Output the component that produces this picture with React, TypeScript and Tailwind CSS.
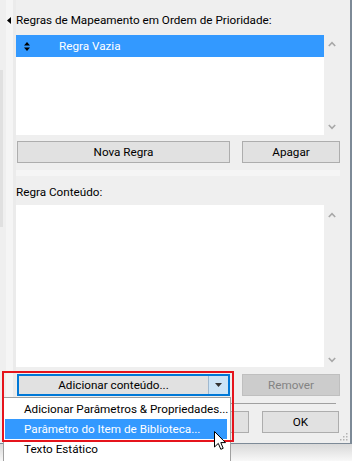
import React from "react";

function ChevUp() {
  return (
    <svg width="8" height="6" viewBox="0 0 8 6">
      <polyline points="0.8,5 4,1.6 7.2,5" fill="none" stroke="#a8a8a8" strokeWidth="1.6" />
    </svg>
  );
}
function ChevDown() {
  return (
    <svg width="8" height="6" viewBox="0 0 8 6">
      <polyline points="0.8,1 4,4.4 7.2,1" fill="none" stroke="#a8a8a8" strokeWidth="1.6" />
    </svg>
  );
}

function Btn({ children, className = "" }: { children?: React.ReactNode; className?: string }) {
  return (
    <div
      className={
        "h-[22px] flex items-center justify-center border border-[#adadad] bg-[#e1e1e1] text-black " + className
      }
    >
      {children}
    </div>
  );
}

export default function App() {
  return (
    <div className="relative w-[352px] h-[461px] overflow-hidden bg-[#efefef] text-[11.7px] leading-[16px] text-black font-[Roboto,'Noto_Sans',sans-serif] flex flex-col">
      {/* window */}
      <div className="h-[444px] flex border-r-2 border-b border-[#7d8a97]">
        {/* left gutter */}
        <div className="w-[16px] flex">
          <div className="w-[6px] flex flex-col">
            <div className="h-[70px]" />
            <div className="w-[3px] h-[157px] bg-[#e0e0e0]" />
          </div>
          <div className="w-[7px] bg-[#f5f5f5] pt-[17px] pl-px">
            <svg width="4" height="7" viewBox="0 0 4 7">
              <polygon points="4,0 0,3.5 4,7" fill="#000" />
            </svg>
          </div>
          <div className="w-[3px] bg-[#ebebeb]" />
        </div>

        {/* main */}
        <div className="flex-1 flex flex-col pr-[10px]">
          <div className="h-[35px] pt-[12px] whitespace-nowrap">Regras de Mapeamento em Ordem de Prioridade:</div>

          {/* rules list */}
          <div className="h-[100px] flex">
            <div className="flex-1 bg-white">
              <div className="h-[22px] bg-[#3399ff] text-white flex items-center">
                <div className="w-[43px] pl-[8px] flex items-center">
                  <svg width="6" height="9" viewBox="0 0 6 9">
                    <polygon points="3,0 6,3.5 0,3.5" fill="#000" />
                    <polygon points="0,5.5 6,5.5 3,9" fill="#000" />
                  </svg>
                </div>
                <span>Regra Vazia</span>
              </div>
            </div>
            <div className="w-[16px] flex flex-col items-center justify-between pt-[6px] pb-[5px]">
              <ChevUp />
              <ChevDown />
            </div>
          </div>

          <div className="mt-[6px] flex">
            <Btn className="ml-px w-[213px]">Nova Regra</Btn>
            <Btn className="ml-auto w-[98px]">Apagar</Btn>
          </div>

          <div className="mt-[7px] h-[6px] bg-[#f5f5f5]" />

          <div className="h-[29px] pt-[8px]">Regra Conteúdo:</div>

          {/* content box */}
          <div className="h-[162px] flex">
            <div className="flex-1 bg-white" />
            <div className="w-[16px] flex flex-col items-center justify-between pt-[7px] pb-[4px]">
              <ChevUp />
              <ChevDown />
            </div>
          </div>

          <div className="mt-[7px] flex">
            <div className="ml-px w-[213px] h-[22px] flex border-2 border-[#0078d7] bg-[#e1e1e1]">
              <div className="flex-1 flex items-center justify-center">Adicionar conteúdo...</div>
              <div className="w-[20px] border-l border-[#9fb8cf] bg-[#cce4f7] flex items-center justify-center">
                <svg width="7" height="4" viewBox="0 0 7 4">
                  <polygon points="0,0 7,0 3.5,4" fill="#333" />
                </svg>
              </div>
            </div>
            <div className="ml-auto w-[98px] h-[22px] flex items-center justify-center border border-[#bfbfbf] bg-[#cccccc] text-[#838383]">
              Remover
            </div>
          </div>

          <div className="mt-[7px] mr-[4px] h-px bg-[#a0a0a0]" />

          <div className="mt-[7px] flex justify-end gap-[13px] pr-px">
            <Btn className="w-[77px]" />
            <Btn className="w-[77px]">OK</Btn>
          </div>

          <div className="flex-1 flex justify-end items-end pb-[2px]">
            <svg width="8" height="8" viewBox="0 0 8 8" className="-mr-[8px]">
              <rect x="6" y="0" width="1.5" height="1.5" fill="#b4b4b4" />
              <rect x="3" y="3" width="1.5" height="1.5" fill="#b4b4b4" />
              <rect x="6" y="3" width="1.5" height="1.5" fill="#b4b4b4" />
              <rect x="0" y="6" width="1.5" height="1.5" fill="#b4b4b4" />
              <rect x="3" y="6" width="1.5" height="1.5" fill="#b4b4b4" />
              <rect x="6" y="6" width="1.5" height="1.5" fill="#b4b4b4" />
            </svg>
          </div>
        </div>
      </div>

      {/* shadow below window */}
      <div className="flex-1 bg-gradient-to-b from-[#d9d9d9] to-[#f8f8f8]" />

      {/* dropdown menu */}
      <div className="absolute left-[3px] top-[397px] w-[228px] h-[70px] bg-white border border-[#a0a0a0] pt-px">
        <div className="h-[20px] flex items-center pl-[20px] whitespace-nowrap">Adicionar Parâmetros &amp; Propriedades...</div>
        <div className="h-[20px] ml-px mr-[3px] bg-[#3399ff] text-white flex items-center pl-[19px] whitespace-nowrap">
          Parâmetro do Item de Biblioteca...
        </div>
        <div className="h-[20px] flex items-center pl-[20px] whitespace-nowrap">Texto Estático</div>
      </div>

      {/* red highlight */}
      <div className="absolute left-[2px] top-[371px] w-[232px] h-[71px] border-2 border-[#e5141c]" />

      {/* cursor */}
      <svg className="absolute left-[214px] top-[431px]" width="13" height="20" viewBox="0 0 13 20">
        <polygon
          points="0.5,0.5 0.5,16 4.3,12.4 6.8,18.3 9.2,17.3 6.8,11.6 11.5,11.6"
          fill="#fff"
          stroke="#000"
          strokeWidth="1"
          strokeLinejoin="miter"
        />
      </svg>
    </div>
  );
}
